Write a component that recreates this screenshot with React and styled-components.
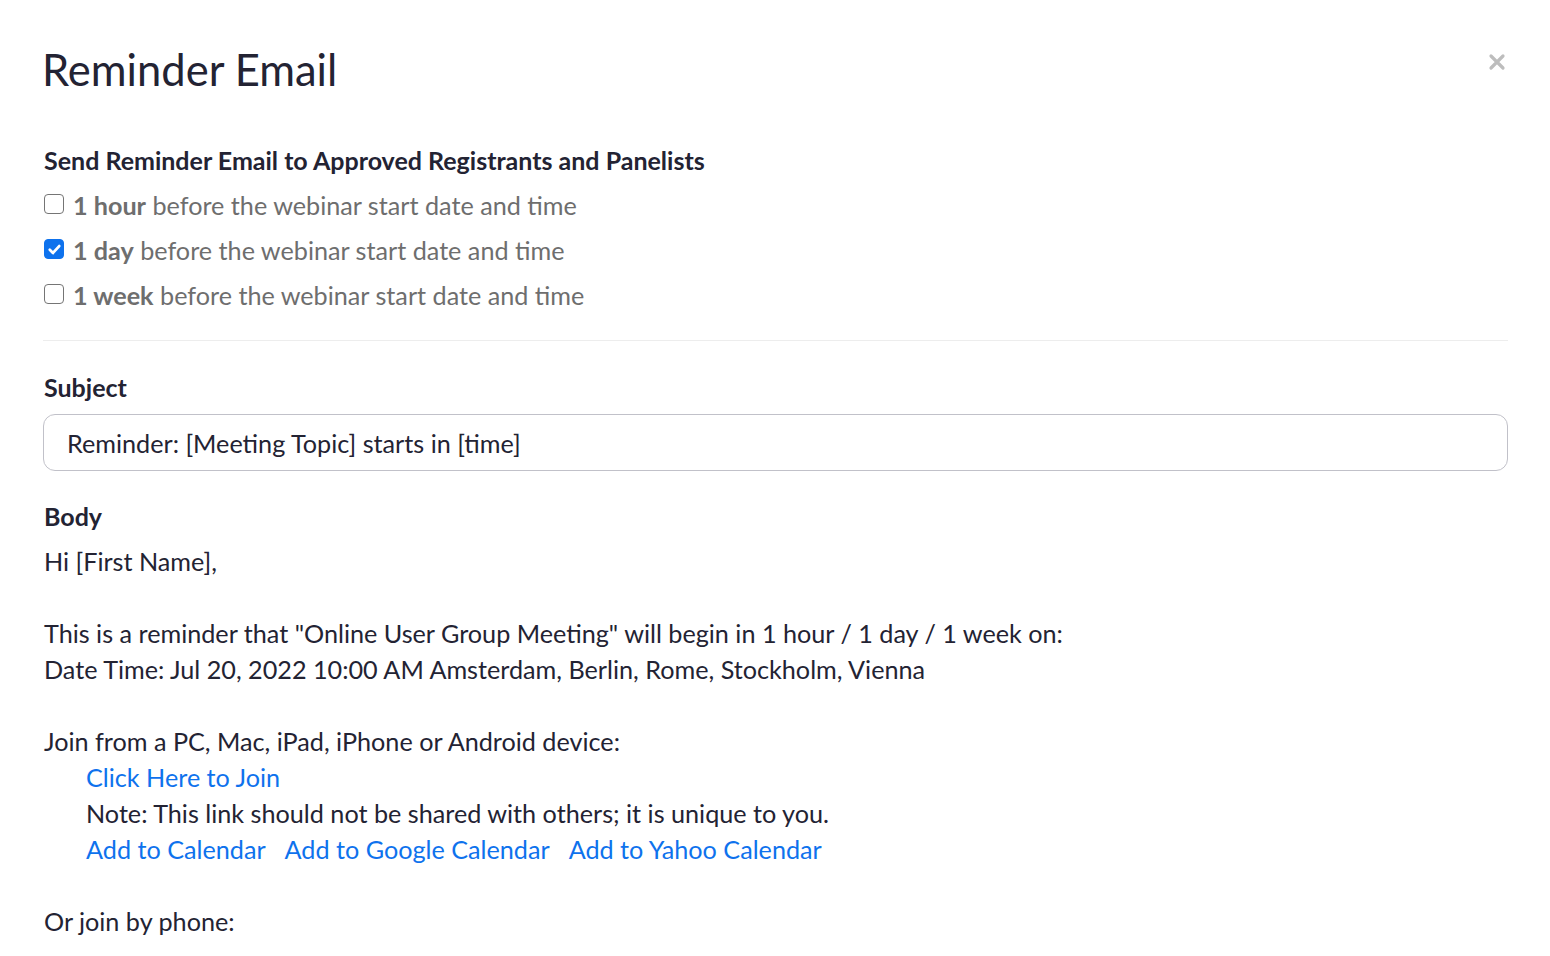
import { useState } from 'react';
import styled, { createGlobalStyle } from 'styled-components';

const GlobalStyle = createGlobalStyle`
  html, body {
    margin: 0;
    padding: 0;
    background: #fff;
  }
  body {
    font-family: Lato, "Open Sans", "Liberation Sans", sans-serif;
    color: #232333;
  }
`;

const reminders = [
  { id: 'hour', unit: '1 hour', checked: false },
  { id: 'day', unit: '1 day', checked: true },
  { id: 'week', unit: '1 week', checked: false },
];

function CheckIcon() {
  return (
    <svg width="15" height="15" viewBox="0 0 14 14">
      <path d="M2.6 7.3 L5.6 10.2 L11.4 3.8" fill="none" stroke="#fff" strokeWidth="2.6" strokeLinecap="round" strokeLinejoin="round" />
    </svg>
  );
}

function App() {
  const [checked, setChecked] = useState(
    Object.fromEntries(reminders.map(r => [r.id, r.checked]))
  );
  const [subject, setSubject] = useState('Reminder: [Meeting Topic] starts in [time]');

  const toggle = (id) => setChecked(c => ({ ...c, [id]: !c[id] }));

  return (
    <S.Dialog>
      <GlobalStyle />
      <S.Header>
        <S.Title>Reminder Email</S.Title>
        <S.Close aria-label="Close">
          <svg width="18" height="18" viewBox="0 0 18 18">
            <path d="M3 3 L15 15 M15 3 L3 15" stroke="#bdbdbd" strokeWidth="3.2" strokeLinecap="round" />
          </svg>
        </S.Close>
      </S.Header>

      <S.SectionLabel>Send Reminder Email to Approved Registrants and Panelists</S.SectionLabel>
      <S.Options>
        {reminders.map(r => (
          <S.Option key={r.id} onClick={() => toggle(r.id)}>
            <S.Box $checked={checked[r.id]}>
              {checked[r.id] && <CheckIcon />}
            </S.Box>
            <span><b>{r.unit}</b> before the webinar start date and time</span>
          </S.Option>
        ))}
      </S.Options>

      <S.Divider />

      <S.FieldLabel>Subject</S.FieldLabel>
      <S.Input value={subject} onChange={e => setSubject(e.target.value)} />

      <S.BodyLabel>Body</S.BodyLabel>
      <S.Body>
        <S.Line>Hi [First Name],</S.Line>
        <S.Blank />
        <S.Line>This is a reminder that "Online User Group Meeting" will begin in 1 hour / 1 day / 1 week on:</S.Line>
        <S.Line>Date Time: Jul 20, 2022 10:00 AM Amsterdam, Berlin, Rome, Stockholm, Vienna</S.Line>
        <S.Blank />
        <S.Line>Join from a PC, Mac, iPad, iPhone or Android device:</S.Line>
        <S.Indent>
          <S.Line><S.Link href="#">Click Here to Join</S.Link></S.Line>
          <S.Line>Note: This link should not be shared with others; it is unique to you.</S.Line>
          <S.Line>
            <S.Link href="#">Add to Calendar</S.Link>
            <S.Link href="#">Add to Google Calendar</S.Link>
            <S.Link href="#">Add to Yahoo Calendar</S.Link>
          </S.Line>
        </S.Indent>
        <S.Blank />
        <S.Line>Or join by phone:</S.Line>
      </S.Body>
    </S.Dialog>
  );
}

const S = {
  Dialog: styled.div`
    box-sizing: border-box;
    width: 100%;
    min-height: 100vh;
    padding: 44px 42px 0 43px;
    background: #fff;
  `,
  Header: styled.div`
    display: flex;
    align-items: flex-start;
    justify-content: space-between;
    margin-bottom: 48px;
  `,
  Title: styled.h1`
    margin: 0 0 0 -1px;
    font-size: 43.5px;
    line-height: 50px;
    font-weight: 400;
    color: #232333;
  `,
  Close: styled.button`
    display: flex;
    padding: 0;
    margin: 9px 2px 0 0;
    border: none;
    background: none;
    cursor: pointer;
  `,
  SectionLabel: styled.div`
    margin-left: 1px;
    font-size: 25px;
    line-height: 36px;
    font-weight: 700;
    color: #232333;
    margin-bottom: 4px;
  `,
  Options: styled.div`
    display: flex;
    flex-direction: column;
  `,
  Option: styled.label`
    display: flex;
    align-items: center;
    gap: 9px;
    height: 45px;
    font-size: 25.2px;
    color: #6e6e6e;
    cursor: pointer;
    b { font-weight: 700; }
  `,
  Box: styled.span`
    box-sizing: border-box;
    width: 20px;
    height: 20px;
    margin: -1px 0 0 1px;
    display: flex;
    align-items: center;
    justify-content: center;
    border-radius: 4px;
    border: 1.8px solid ${p => (p.$checked ? '#0e72ed' : '#757575')};
    background: ${p => (p.$checked ? '#0e72ed' : '#fff')};
  `,
  Divider: styled.hr`
    margin: 23px 0 28px;
    border: none;
    border-top: 1px solid #ededed;
  `,
  FieldLabel: styled.div`
    margin-left: 1px;
    font-size: 25px;
    line-height: 36px;
    font-weight: 700;
    color: #232333;
    margin-bottom: 9px;
  `,
  BodyLabel: styled.div`
    margin: 27px 0 9px 1px;
    font-size: 25px;
    line-height: 36px;
    font-weight: 700;
    color: #232333;
  `,
  Input: styled.input`
    box-sizing: border-box;
    display: block;
    width: 100%;
    height: 57px;
    padding: 0 23px;
    border: 1px solid #c1c1c9;
    border-radius: 12px;
    font-family: inherit;
    font-size: 25.2px;
    color: #232333;
    outline: none;
  `,
  Body: styled.div`
    margin-left: 1px;
    font-size: 25.2px;
    line-height: 36px;
    color: #232333;
  `,
  Line: styled.div`
    white-space: nowrap;
  `,
  Blank: styled.div`
    height: 36px;
  `,
  Indent: styled.div`
    padding-left: 42px;
  `,
  Link: styled.a`
    color: #0e72ed;
    text-decoration: none;
    margin-right: 19px;
  `,
};

export default App;
